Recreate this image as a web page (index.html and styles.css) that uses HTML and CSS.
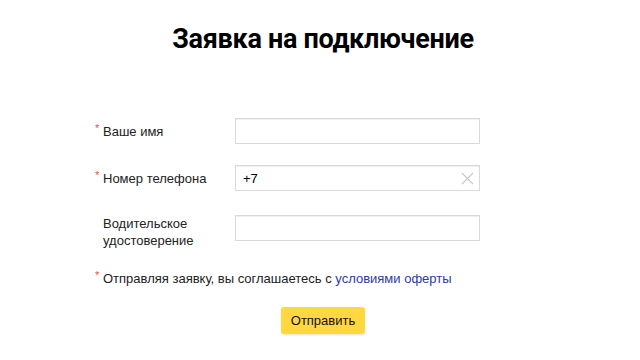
FILE: index.html
```html
<!DOCTYPE html>
<html lang="ru">
<head>
    <meta charset="UTF-8">
    <meta name="viewport" content="width=device-width, initial-scale=1.0">
    <title>Заявка на подключение</title>
    <link rel="stylesheet" href="styles.css">
</head>
<body>
    <div class="page">
        <h1>Заявка на подключение</h1>
        <form class="form">
            <div class="row">
                <label class="label"><span class="req">*</span>Ваше имя</label>
                <div class="field"><input class="input" type="text"></div>
            </div>
            <div class="row row-phone">
                <label class="label"><span class="req">*</span>Номер телефона</label>
                <div class="field">
                    <input class="input" type="tel" value="+7">
                    <span class="clear">
                        <svg width="13" height="13" viewBox="0 0 13 13">
                            <path d="M1 1 L12 12 M12 1 L1 12" stroke="#c8c8c8" stroke-width="1.1" fill="none"/>
                        </svg>
                    </span>
                </div>
            </div>
            <div class="row row-multi">
                <label class="label">Водительское<br>удостоверение</label>
                <div class="field"><input class="input" type="text"></div>
            </div>
            <p class="agree"><span class="req">*</span>Отправляя заявку, вы соглашаетесь с <a href="#">условиями оферты</a></p>
            <div class="actions">
                <button type="button" class="submit">Отправить</button>
            </div>
        </form>
    </div>
</body>
</html>
```

FILE: styles.css
```css
body {
    margin: 0;
    background: #fff;
    color: #000;
    font-family: 'Liberation Sans', Arial, sans-serif;
    font-size: 13px;
}

.page {
    width: 640px;
    height: 360px;
    overflow: hidden;
}

h1 {
    margin: 22px 0 0;
    padding-left: 6px;
    font-family: Roboto, 'Noto Sans', sans-serif;
    font-weight: 700;
    font-size: 27px;
    line-height: 34px;
    letter-spacing: -0.3px;
    text-align: center;
}

.form {
    margin: 62px 0 0 95px;
}

.row {
    display: flex;
    align-items: center;
}

.row-phone {
    margin-top: 21px;
}

.row-multi {
    margin-top: 24px;
    align-items: flex-start;
}

.label {
    width: 140px;
    padding-left: 8px;
    box-sizing: border-box;
    line-height: 17px;
    color: #222;
}

.row:first-child .label {
    padding-top: 1px;
}

.req {
    display: inline-block;
    width: 8px;
    margin-left: -8px;
    color: #e0523f;
    font-size: 11px;
    line-height: 11px;
    vertical-align: top;
}

.field {
    position: relative;
    width: 245px;
}

.input {
    display: block;
    width: 100%;
    height: 26px;
    box-sizing: border-box;
    margin: 0;
    padding: 0 7px;
    border: 1px solid #d9d9d9;
    border-radius: 0;
    box-shadow: inset 0 1px 0 #f0f0f0;
    background: #fff;
    font-family: inherit;
    font-size: 13px;
    color: #000;
    outline: none;
}

.clear {
    position: absolute;
    right: 6px;
    top: 7px;
    width: 13px;
    height: 13px;
    line-height: 0;
}

.agree {
    margin: 21px 0 0;
    padding-left: 8px;
    line-height: 17px;
    color: #222;
}

.agree a {
    color: #2d3aa6;
    text-decoration: none;
}

.actions {
    padding-left: 186px;
    margin-top: 20px;
}

.submit {
    width: 84px;
    height: 27px;
    border: none;
    border-radius: 3px;
    background: #ffd83f;
    box-shadow: 0 1px 2px rgba(200, 160, 0, 0.25);
    font-family: inherit;
    font-size: 13px;
    color: #111;
    cursor: pointer;
    padding: 0;
}
```
